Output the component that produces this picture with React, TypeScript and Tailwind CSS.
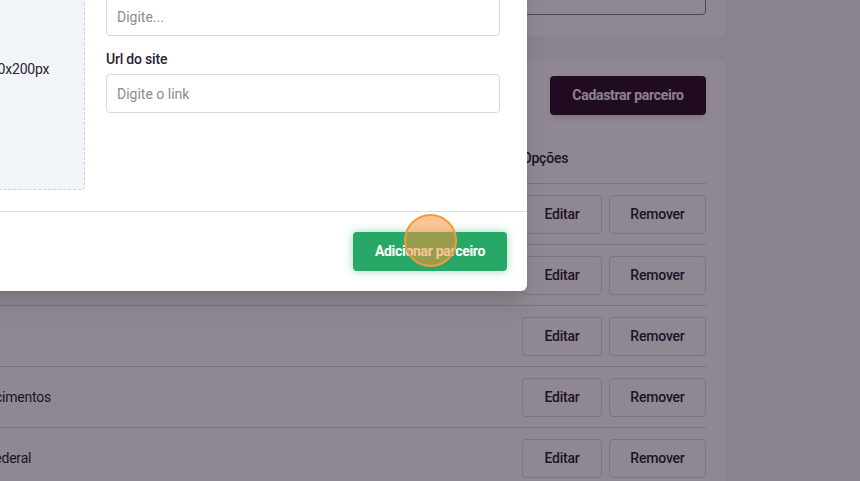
import { useState } from 'react';

const partners = [
  { id: 'p-1', name: 'Sesc' },
  { id: 'p-2', name: 'Senac' },
  { id: 'p-3', name: 'Sebrae' },
  { id: 'p-4', name: 'Estabelecimentos' },
  { id: 'p-5', name: 'Polícia Federal' },
];

const font = { fontFamily: 'Roboto, "Liberation Sans", sans-serif' };

export default function App() {
  const [isOpen] = useState(true);

  return (
    <div
      className="relative h-[481px] w-[860px] overflow-hidden bg-[#f3f5f9] text-[#2c2333]"
      style={font}
    >
      {/* page behind the modal */}
      <div className="ml-[-77px] mr-[134px] flex flex-col gap-[25px]">
        <section className="-mt-[55px] rounded-b bg-white px-5 pb-[21px] pt-4">
          <div className="flex justify-end">
            <div className="h-[54px] w-[540px] rounded border border-[#8a8290]" />
          </div>
        </section>

        <section className="rounded bg-white px-5 pt-[15px]">
          <div className="flex justify-end">
            <button
              type="button"
              className="h-[39px] w-[156px] rounded bg-[#2f1429] text-[14px] font-bold tracking-[-0.3px] text-[#f6f2f8] shadow-md"
            >
              Cadastrar parceiro
            </button>
          </div>

          <div className="mt-[33px] flex border-b border-[#d9d6dd] pb-[15px] text-[14px] font-medium leading-[20px]">
            <span className="flex-1">Nome</span>
            <span className="w-[184px] tracking-[-0.2px]">Opções</span>
          </div>

          <ul>
            {partners.map(item => (
              <li
                key={item.id}
                className="flex h-[61px] items-center border-b border-[#d9d6dd] text-[14px]"
              >
                <span className="flex-1 tracking-[-0.2px]">{item.name}</span>
                <div className="flex gap-[7px]">
                  <button
                    type="button"
                    className="h-[39px] w-[80px] rounded border border-[#dcd8e0] font-medium tracking-[-0.2px]"
                  >
                    Editar
                  </button>
                  <button
                    type="button"
                    className="h-[39px] w-[97px] rounded border border-[#dcd8e0] font-medium tracking-[-0.2px]"
                  >
                    Remover
                  </button>
                </div>
              </li>
            ))}
          </ul>
        </section>
      </div>

      {isOpen && (
        <>
          <div className="absolute inset-0 bg-[rgba(17,2,25,0.47)]" />

          <div className="absolute left-[-119px] top-[-112px] w-[646px] rounded-md bg-white shadow-xl">
            <div className="flex h-[60px] items-center border-b border-[#dedede] px-6 text-[18px] font-bold">
              Adicionar parceiro
            </div>

            <div className="flex gap-[21px] pb-[21px] pl-6 pr-[27px] pt-6">
              <div className="flex w-[180px] items-center justify-center rounded border border-dashed border-[#ccd3dd] bg-[#f1f4f9] pb-6 pr-[22px] text-[14px] tracking-[-0.2px] text-[#2c2333]">
                Tamanho: 200x200px
              </div>

              <div className="flex flex-1 flex-col">
                <label className="text-[14px] font-medium tracking-[-0.2px]">Nome</label>
                <input
                  className="mt-1 h-[39px] rounded border border-[#d9d9d9] px-[10px] text-[14px] placeholder:text-[#8c8c8c] focus:outline-none"
                  placeholder="Digite..."
                />

                <label className="mt-[13px] text-[14px] font-medium tracking-[-0.2px]">Url do site</label>
                <input
                  className="mt-1 h-[39px] rounded border border-[#d9d9d9] px-[10px] text-[14px] placeholder:text-[#8c8c8c] focus:outline-none"
                  placeholder="Digite o link"
                />

                <div className="h-[77px]" />
              </div>
            </div>

            <div className="flex justify-end border-t border-[#dedede] px-5 py-5">
              <button
                type="button"
                className="h-[39px] w-[154px] rounded bg-[#27a866] text-[14px] font-bold tracking-[-0.3px] text-white shadow-[0_0_10px_rgba(39,168,102,0.45)]"
              >
                Adicionar parceiro
              </button>
            </div>
          </div>

          {/* click marker */}
          <div className="absolute left-[404px] top-[214px] h-[53px] w-[53px] rounded-full border-2 border-[#f39a3c] bg-[rgba(248,150,60,0.55)]" />
        </>
      )}
    </div>
  );
}
